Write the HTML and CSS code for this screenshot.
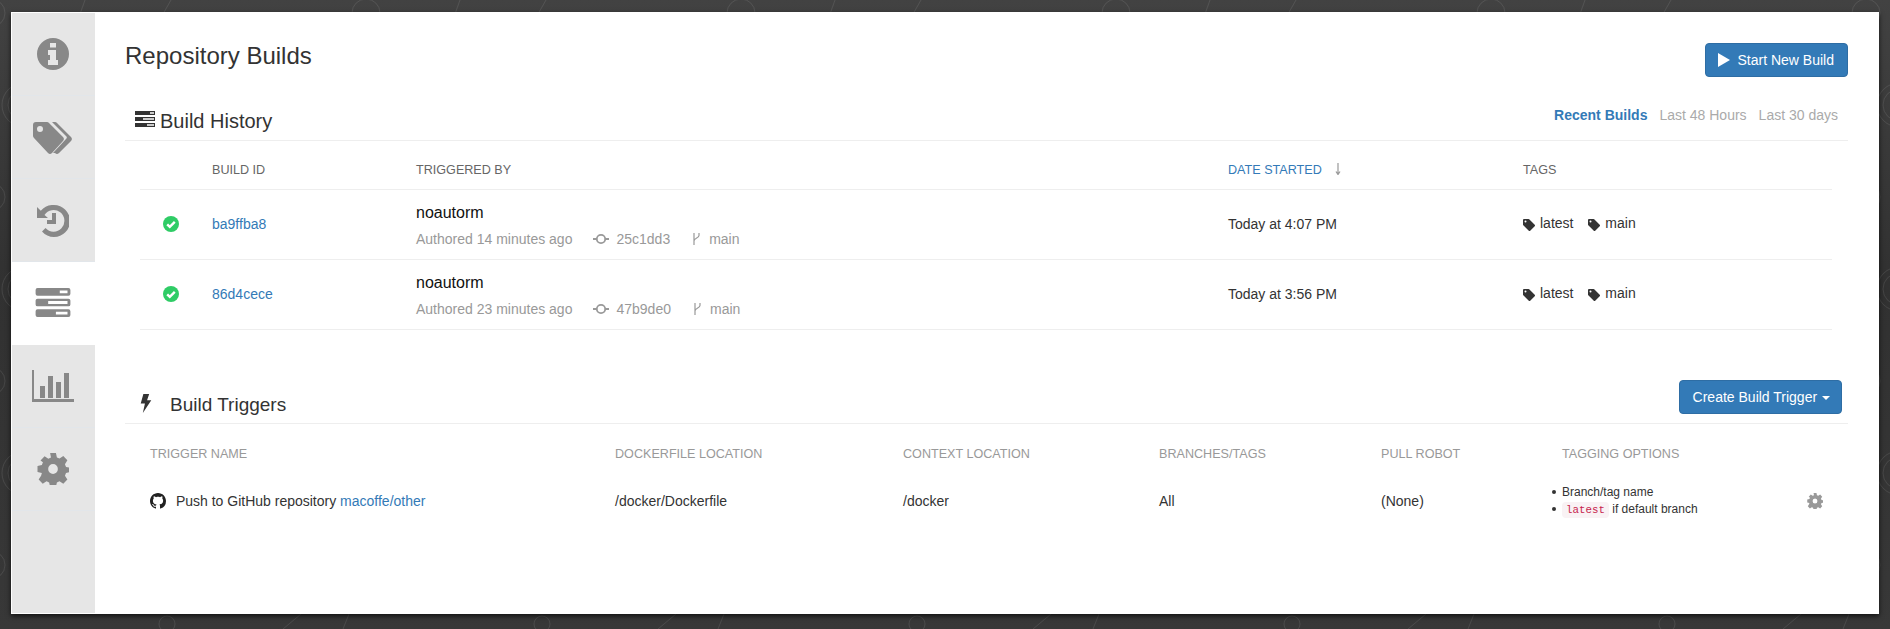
FILE: index.html
```html
<!DOCTYPE html>
<html>
	<head>
		<meta charset="UTF-8">
		<title>Repository Builds</title>
		<link rel="stylesheet" href="styles.css">
	</head>

	<body>

		<div class="panel">

			<nav class="tabs">
				<a class="tab">
					<svg class="tab-icon" viewBox="0 0 32 32"><path fill-rule="evenodd" d="M16 0a16 16 0 1 0 0 32a16 16 0 0 0 0-32zM13 5h6v4.500h-6zM11 12h8v10h2v5H11v-5h2v-5h-2z"/></svg>
				</a>
				<a class="tab">
					<svg class="tab-icon tab-icon-tags" viewBox="0 0 40 32"><path fill-rule="evenodd" d="M3 0h11a3 3 0 0 1 2 1l14 14a3 3 0 0 1 0 4L19 31a3 3 0 0 1-4 0L1 16a3 3 0 0 1-1-2V3a3 3 0 0 1 3-3zM7 4a3 3 0 1 0 0 6a3 3 0 0 0 0-6z"/><path d="M19 0h3a3 3 0 0 1 2 1l14 14a3 3 0 0 1 0 4L26 31a3 3 0 0 1-4 0h-2l13-14a2 2 0 0 0 0-3z"/></svg>
				</a>
				<a class="tab">
					<svg class="tab-icon tab-icon-history" viewBox="0 0 32 32"><path d="M17 0a15.800 15.800 0 0 1 0 32a15.800 15.800 0 0 1-12-5.500l3.500-3.500a10.800 10.800 0 1 0-1-13L11 13H0V2l3.800 3.800A15.800 15.800 0 0 1 17 0z"/><path d="M15 8h4v11h-9v-4h5z"/></svg>
				</a>
				<a class="tab active">
					<svg class="tab-icon tab-icon-servers" viewBox="0 0 36 30"><path fill-rule="evenodd" d="M2 0h32a2 2 0 0 1 2 2v4a2 2 0 0 1-2 2H2a2 2 0 0 1-2-2V2a2 2 0 0 1 2-2zM25 2.500v3h8v-3zM2 11h32a2 2 0 0 1 2 2v4a2 2 0 0 1-2 2H2a2 2 0 0 1-2-2v-4a2 2 0 0 1 2-2zM13 13.500v3h20v-3zM2 22h32a2 2 0 0 1 2 2v4a2 2 0 0 1-2 2H2a2 2 0 0 1-2-2v-4a2 2 0 0 1 2-2zM21 24.500v3h12v-3z"/></svg>
				</a>
				<a class="tab">
					<svg class="tab-icon tab-icon-chart" viewBox="0 0 42 32"><path d="M0 0h2v29h40v3H0z"/><path d="M8 16h5v12H8zM16 6h5v22h-5zM24 12h5v16h-5zM32 3h5v25h-5z"/></svg>
				</a>
				<a class="tab">
					<svg class="tab-icon" viewBox="0 0 32 32"><use href="#gear"/></svg>
				</a>
				<div class="tabs-rest"></div>
			</nav>

			<main class="content">

				<div class="page-head">
					<h1>Repository Builds</h1>
					<button class="btn btn-start">
						<svg class="play" viewBox="0 0 12 14"><path d="M0 0l12 7L0 14z"/></svg>
						Start New Build
					</button>
				</div>

				<section class="history">
					<div class="section-head">
						<h2>
							<svg class="head-icon" viewBox="0 0 20 16"><path fill-rule="evenodd" d="M0 0h20v4H0zM15 1.200v1.500h4V1.200zM0 6h20v4H0zM8 7.200v1.500h11V7.200zM0 12h20v4H0zM12 13.200v1.500h7v-1.500z"/></svg>
							Build History
						</h2>
						<div class="filters">
							<a class="filter current">Recent Builds</a>
							<a class="filter">Last 48 Hours</a>
							<a class="filter">Last 30 days</a>
						</div>
					</div>

					<table class="builds">
						<thead>
							<tr>
								<th class="col-status"></th>
								<th class="col-id">BUILD ID</th>
								<th class="col-by">TRIGGERED BY</th>
								<th class="col-date sorted">DATE STARTED<svg class="sort-arrow" viewBox="0 0 6 12"><path d="M3 0v11M1 8.500L3 11.500 5 8.500"/></svg></th>
								<th>TAGS</th>
							</tr>
						</thead>
						<tbody>
							<tr>
								<td class="status"><svg class="check" viewBox="0 0 16 16"><circle cx="8" cy="8" r="8"/><path d="M4.200 8.300l2.600 2.600 5-5"/></svg></td>
								<td><a class="link">ba9ffba8</a></td>
								<td class="trigger-cell">
									<div class="author">noautorm</div>
									<div class="meta">
										<span>Authored 14 minutes ago</span>
										<span class="meta-item"><svg class="commit" viewBox="0 0 16 12"><use href="#commit"/></svg>25c1dd3</span>
										<span class="meta-item"><svg class="branch" viewBox="0 0 10 14"><use href="#branch"/></svg>main</span>
									</div>
								</td>
								<td>Today at 4:07 PM</td>
								<td>
									<span class="tag"><svg class="tag-icon" viewBox="0 0 12 12"><use href="#tag"/></svg>latest</span>
									<span class="tag"><svg class="tag-icon" viewBox="0 0 12 12"><use href="#tag"/></svg>main</span>
								</td>
							</tr>
							<tr>
								<td class="status"><svg class="check" viewBox="0 0 16 16"><circle cx="8" cy="8" r="8"/><path d="M4.200 8.300l2.600 2.600 5-5"/></svg></td>
								<td><a class="link">86d4cece</a></td>
								<td class="trigger-cell">
									<div class="author">noautorm</div>
									<div class="meta">
										<span>Authored 23 minutes ago</span>
										<span class="meta-item"><svg class="commit" viewBox="0 0 16 12"><use href="#commit"/></svg>47b9de0</span>
										<span class="meta-item"><svg class="branch" viewBox="0 0 10 14"><use href="#branch"/></svg>main</span>
									</div>
								</td>
								<td>Today at 3:56 PM</td>
								<td>
									<span class="tag"><svg class="tag-icon" viewBox="0 0 12 12"><use href="#tag"/></svg>latest</span>
									<span class="tag"><svg class="tag-icon" viewBox="0 0 12 12"><use href="#tag"/></svg>main</span>
								</td>
							</tr>
						</tbody>
					</table>
				</section>

				<section class="triggers">
					<div class="section-head">
						<h2>
							<svg class="bolt" viewBox="0 0 10 18"><path d="M2.500 0H8L6 6h4L2 18l2-9H0z"/></svg>
							Build Triggers
						</h2>
						<button class="btn btn-create">Create Build Trigger <span class="caret"></span></button>
					</div>

					<table class="trigger-table">
						<thead>
							<tr>
								<th class="col-name">TRIGGER NAME</th>
								<th class="col-docker">DOCKERFILE LOCATION</th>
								<th class="col-context">CONTEXT LOCATION</th>
								<th class="col-branches">BRANCHES/TAGS</th>
								<th class="col-robot">PULL ROBOT</th>
								<th class="col-tagging">TAGGING OPTIONS</th>
								<th></th>
							</tr>
						</thead>
						<tbody>
							<tr>
								<td>
									<svg class="github" viewBox="0 0 16 16"><path d="M8 0C3.580 0 0 3.580 0 8c0 3.540 2.290 6.530 5.470 7.590.4.070.55-.17.55-.38 0-.19-.01-.82-.01-1.490-2.010.37-2.530-.49-2.690-.94-.09-.23-.48-.94-.82-1.130-.28-.15-.68-.52-.01-.53.63-.01 1.080.58 1.230.82.720 1.210 1.870.87 2.330.66.070-.52.280-.87.510-1.070-1.780-.2-3.640-.89-3.640-3.950 0-.87.310-1.590.820-2.150-.08-.2-.36-1.020.08-2.120 0 0 .67-.21 2.200.82.640-.18 1.320-.27 2-.27s1.360.09 2 .27c1.530-1.040 2.200-.82 2.200-.82.44 1.100.16 1.920.08 2.120.51.560.82 1.270.82 2.150 0 3.070-1.870 3.750-3.650 3.950.29.250.54.730.54 1.480 0 1.070-.01 1.930-.01 2.200 0 .21.150.460.550.380A8.010 8.010 0 0 0 16 8c0-4.420-3.580-8-8-8z"/></svg>
									Push to GitHub repository <a class="link">macoffe/other</a>
								</td>
								<td>/docker/Dockerfile</td>
								<td>/docker</td>
								<td>All</td>
								<td>(None)</td>
								<td>
									<ul class="tag-options">
										<li>Branch/tag name</li>
										<li><code>latest</code> if default branch</li>
									</ul>
								</td>
								<td><svg class="row-gear" viewBox="0 0 32 32"><use href="#gear"/></svg></td>
							</tr>
						</tbody>
					</table>
				</section>

			</main>
		</div>

		<svg class="defs" width="0" height="0">
			<defs>
				<path id="gear" fill-rule="evenodd" d="M13 0h6l1 4.500 2.700 1.100 3.900-2.500 4.200 4.200-2.500 3.900 1.100 2.700 4.500 1V19l-4.500 1-1.100 2.700 2.500 3.900-4.200 4.200-3.900-2.500-2.700 1.100-1 4.500h-6l-1-4.500-2.700-1.100-3.900 2.500-4.200-4.200 2.500-3.900L4.500 20 0 19v-6l4.500-1 1.100-2.700L3.100 7.400l4.200-4.200 3.900 2.500L13.900 4.600zM16 11a5 5 0 1 0 0 10a5 5 0 0 0 0-10z" transform="translate(0.500 0) scale(0.97 1)"/>
				<g id="commit" fill="none" stroke="currentColor" stroke-width="1.800"><circle cx="8" cy="6" r="4.200"/><path d="M0 6h3.800M12.200 6H16"/></g>
				<g id="branch" fill="none" stroke="currentColor" stroke-width="1.200"><path d="M3 1v12M8 1v2.500C8 6 3 6 3 9"/></g>
				<path id="tag" fill-rule="evenodd" d="M1 0h4.500a1 1 0 0 1 .7.300l5.500 5.500a1 1 0 0 1 0 1.400l-4.500 4.500a1 1 0 0 1-1.400 0L.3 6.200A1 1 0 0 1 0 5.500V1a1 1 0 0 1 1-1zM2.500 1.600a1 1 0 1 0 0 2a1 1 0 0 0 0-2z"/>
			</defs>
		</svg>

	</body>

</html>
```

FILE: styles.css
```css
* { box-sizing: border-box }

html, body { height: 100% }

body {
	margin: 0;
	padding: 12px 11px 15px;
	background-color: #353535;
	background-image:
		url("data:image/svg+xml,%3Csvg xmlns='http://www.w3.org/2000/svg' width='375' height='184' fill='none' stroke='%23fff' stroke-opacity='.09'%3E%3Ccircle cx='366' cy='13' r='14'/%3E%3Ccircle cx='-9' cy='13' r='14'/%3E%3Ccircle cx='160' cy='21' r='8'/%3E%3Ccircle cx='24' cy='105' r='22'/%3E%3Ccircle cx='24' cy='105' r='16'/%3E%3Ccircle cx='167' cy='72' r='8'/%3E%3Cpath d='M85 0L80 14M163 14L171 0M283 77L301 62M343 77L349 62'/%3E%3C/svg%3E"),
		linear-gradient(#424242, #313131 45%, #383838);
	background-size: 375px 184px, 100% 100%;
	font: 14px/20px "Liberation Sans", Arial, sans-serif;
	color: #333;
	overflow: hidden;
}

.defs { position: absolute }

.panel {
	height: 602px;
	display: flex;
	background: #fff;
	padding: 1px 0 1px 1px;
	box-shadow: 0 2px 5px rgba(0, 0, 0, .7);
}

/* left tabs */

.tabs {
	width: 83px;
	flex: none;
	display: flex;
	flex-direction: column;
}

.tab {
	height: 83px;
	flex: none;
	display: flex;
	justify-content: center;
	padding: 25px 2px 0 0;
	background: #e6e6e6;
	border-bottom: 1px solid #e2e6ea;
}

.tab.active { background: #fff; border-bottom-color: #fff }

.tabs-rest { flex: 1; background: #e6e6e6 }

.tab-icon {
	width: 32px;
	height: 32px;
	fill: #888;
}

.tab-icon-tags { width: 40px; margin-top: 1px }
.tab-icon-history { margin-top: 1px }
.tab-icon-chart { width: 42px }
.tab-icon-servers { width: 36px; height: 29px; margin-top: 1px }

/* main column */

.content {
	flex: 1;
	min-width: 0;
	padding: 0 31px 0 30px;
}

.page-head {
	height: 88px;
	display: flex;
	justify-content: space-between;
	align-items: flex-start;
}

h1 {
	margin: 30px 0 0;
	font-size: 24px;
	line-height: 26px;
	font-weight: 400;
}

.btn {
	height: 34px;
	padding: 0 12px;
	border: 1px solid #2e6da4;
	border-radius: 4px;
	background: #337ab7;
	color: #fff;
	font: 14px/20px "Liberation Sans", Arial, sans-serif;
}

.btn-start { margin-top: 30px; display: flex; align-items: center; padding-right: 13px }

.play {
	width: 12px;
	height: 14px;
	fill: #fff;
	margin-right: 8px;
	margin-top: -1px;
}

.section-head {
	display: flex;
	justify-content: space-between;
	border-bottom: 1px solid #eee;
}

.history .section-head { height: 40px }

h2 {
	margin: 0;
	font-size: 20px;
	line-height: 24px;
	font-weight: 400;
	display: flex;
	align-items: center;
}

.history h2 { padding: 0 0 0 10px }

.head-icon {
	width: 20px;
	height: 16px;
	fill: #333;
	margin: -3px 5px 0 0;
}

.filters { display: flex; gap: 12px; padding: 4px 10px 0 0 }
.filter { color: #aaa }
.filter.current { color: #337ab7; font-weight: 700 }

/* tables */

table {
	border-collapse: collapse;
	table-layout: fixed;
}

th {
	padding: 0;
	text-align: left;
	font-size: 12.6px;
	font-weight: 400;
}

td { padding: 0; vertical-align: middle }

.link { color: #337ab7 }

.builds {
	width: 1692px;
	margin-left: 15px;
}

.builds th { height: 48px; color: #666; padding-top: 10px }
.builds tr { border-bottom: 1px solid #eee }
.builds td { height: 70px }

.col-status { width: 72px }
.col-id { width: 204px }
.col-by { width: 812px }
.col-date { width: 295px }

.builds th.sorted { color: #337ab7 }

.sort-arrow {
	width: 6px;
	height: 12px;
	margin-left: 13px;
	vertical-align: -1px;
	fill: none;
	stroke: #999;
	stroke-width: 1.200;
}

.status { padding-left: 23px }

.check {
	display: block;
	width: 16px;
	height: 16px;
	fill: #2fcc66;
}

.check path {
	fill: none;
	stroke: #fff;
	stroke-width: 2.400;
}

.trigger-cell { padding-top: 3px }

.author {
	font-size: 16px;
	line-height: 20px;
	color: #111;
	margin-bottom: 6px;
}

.meta { display: flex; color: #999 }

.meta-item { display: inline-flex; align-items: center; margin-left: 21px }

.commit { width: 16px; height: 12px; margin-right: 7px }
.branch { width: 10px; height: 14px; margin-right: 8px }

.tag { display: inline-flex; align-items: center; margin-right: 11px }
.tag-icon { width: 12px; height: 12px; fill: #333; margin: 2px 5px -2px 0 }

/* triggers */

.triggers { margin-top: 50px }

.triggers .section-head { height: 44px; align-items: flex-start }

.triggers h2 { padding: 13px 0 0 15px; font-size: 19px }

.bolt { width: 12px; height: 19px; fill: #333; margin: -3px 18px 0 0 }

.btn-create { padding: 0 11px 0 13px; margin-right: 6px }

.caret {
	display: inline-block;
	width: 0;
	height: 0;
	margin-left: 1px;
	vertical-align: middle;
	border-top: 4px solid #fff;
	border-left: 4px solid transparent;
	border-right: 4px solid transparent;
}

.trigger-table { width: 1723px }

.trigger-table th { height: 52px; color: #999; padding-top: 8px }
.trigger-table td { height: 50px }

.col-name { width: 490px; padding-left: 25px }
.trigger-table td:first-child { padding-left: 25px }
.col-docker { width: 288px }
.col-context { width: 256px }
.col-branches { width: 222px }
.col-robot { width: 181px }
.col-tagging { width: 245px }

.github {
	width: 16px;
	height: 16px;
	fill: #222;
	vertical-align: -3px;
	margin-right: 6px;
}

.tag-options {
	margin: 0 0 0 -11px;
	padding: 0;
	list-style: none;
	font-size: 12px;
	line-height: 17px;
}

.tag-options li::before {
	content: "";
	display: inline-block;
	width: 4px;
	height: 4px;
	margin: 0 6px 2px 1px;
	border-radius: 50%;
	background: #333;
}

.tag-options code {
	font: 10.8px "Liberation Mono", monospace;
	color: #c7254e;
	background: #f9f2f4;
	padding: 2px 4px;
	border-radius: 4px;
}

.row-gear { display: block; width: 16px; height: 16px; fill: #999 }
```
